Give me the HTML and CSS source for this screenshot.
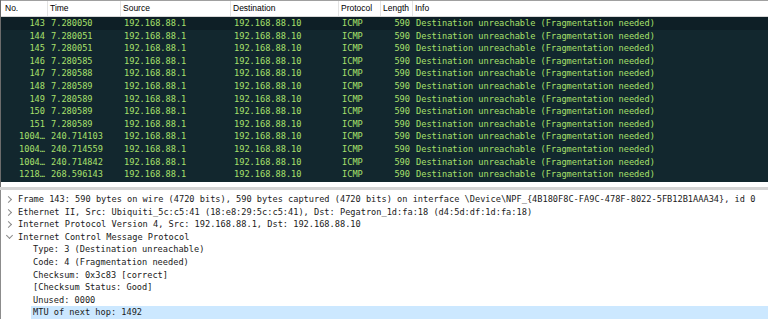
FILE: index.html
```html
<!DOCTYPE html>
<html lang="en">
<head>
    <meta charset="UTF-8">
    <title>Packet capture</title>
    <link rel="stylesheet" href="styles.css">
</head>
<body>
    <div class="packet-list">
        <div class="cols head">
            <div class="cell">No.</div>
            <div class="cell">Time</div>
            <div class="cell">Source</div>
            <div class="cell">Destination</div>
            <div class="cell">Protocol</div>
            <div class="cell">Length</div>
            <div class="cell">Info</div>
        </div>

        <div class="rows" id="rows"></div>
    </div>

    <div class="splitter"></div>

    <div class="details">
        <div class="item top"><span class="arrow closed"></span>Frame 143: 590 bytes on wire (4720 bits), 590 bytes captured (4720 bits) on interface \Device\NPF_{4B180F8C-FA9C-478F-8022-5FB12B1AAA34}, id 0</div>
        <div class="item top"><span class="arrow closed"></span>Ethernet II, Src: Ubiquiti_5c:c5:41 (18:e8:29:5c:c5:41), Dst: Pegatron_1d:fa:18 (d4:5d:df:1d:fa:18)</div>
        <div class="item top"><span class="arrow closed"></span>Internet Protocol Version 4, Src: 192.168.88.1, Dst: 192.168.88.10</div>
        <div class="item top"><span class="arrow open"></span>Internet Control Message Protocol</div>
        <div class="item child">Type: 3 (Destination unreachable)</div>
        <div class="item child">Code: 4 (Fragmentation needed)</div>
        <div class="item child">Checksum: 0x3c83 [correct]</div>
        <div class="item child">[Checksum Status: Good]</div>
        <div class="item child">Unused: 0000</div>
        <div class="item child selected">MTU of next hop: 1492</div>
    </div>

    <script>
        const packets = [
            ['143', '7.280050'],
            ['144', '7.280051'],
            ['145', '7.280051'],
            ['146', '7.280585'],
            ['147', '7.280588'],
            ['148', '7.280589'],
            ['149', '7.280589'],
            ['150', '7.280589'],
            ['151', '7.280589'],
            ['1004…', '240.714103'],
            ['1004…', '240.714559'],
            ['1004…', '240.714842'],
            ['1218…', '268.596143']
        ];

        const rows = document.getElementById('rows');

        packets.forEach((p, i) => {
            const row = document.createElement('div');
            row.className = i === 0 ? 'cols row current' : 'cols row';
            row.innerHTML = `
                <div class="cell num">${p[0]}</div>
                <div class="cell">${p[1]}</div>
                <div class="cell">192.168.88.1</div>
                <div class="cell">192.168.88.10</div>
                <div class="cell">ICMP</div>
                <div class="cell num">590</div>
                <div class="cell">Destination unreachable (Fragmentation needed)</div>
            `;
            rows.appendChild(row);
        });
    </script>
</body>
</html>
```

FILE: styles.css
```css
body {
    margin: 0;
    background: white;
    font-family: "DejaVu Sans Mono", monospace;
    font-size: 8.65px;
    overflow: hidden;
}

.packet-list {
    height: 187px;
    background: white;
    border-left: 1px solid #6c6c6c;
}

.cols {
    display: grid;
    grid-template-columns: 47px 73px 110px 108px 42px 32px 1fr;
}

.cell {
    padding-left: 3px;
    white-space: nowrap;
    overflow: hidden;
}

.head {
    height: 15px;
    border-top: 1px solid #a0a0a0;
    border-bottom: 1px solid #d8d8d8;
    font-family: "Liberation Sans", sans-serif;
    font-size: 8.5px;
    line-height: 15px;
    color: #000;
}

.head .cell {
    border-right: 1px solid #e3e3e3;
    padding-left: 2px;
}

.head .cell:first-child {
    padding-left: 4px;
}

.head .cell:last-child {
    border-right: none;
}

.rows {
    background: #12272e;
    padding-bottom: 1px;
}

.row {
    height: 12.6px;
    line-height: 12.6px;
    color: #a8e06c;
}

.row.current {
    background: #0e1f26;
}

.row .num {
    text-align: right;
    padding-left: 0;
    padding-right: 3px;
}

.splitter {
    height: 3px;
    background: #d4d4d4;
}

.details {
    padding-top: 3px;
    color: #1a1a1a;
    border-left: 1px solid #8c8c8c;
}

.item {
    height: 12.6px;
    line-height: 12.6px;
    white-space: nowrap;
    overflow: hidden;
}

.item.top {
    padding-left: 17px;
    position: relative;
}

.item.child {
    padding-left: 32px;
}

.item.selected {
    margin-left: 30px;
    padding-left: 2px;
    background: #cce8ff;
}

.arrow {
    position: absolute;
    left: 6px;
    top: 4px;
    width: 4px;
    height: 4px;
    border-right: 1px solid #8a8a8a;
    border-bottom: 1px solid #8a8a8a;
}

.arrow.closed {
    transform: rotate(-45deg);
    left: 5px;
}

.arrow.open {
    transform: rotate(45deg);
    top: 2.5px;
}
```
